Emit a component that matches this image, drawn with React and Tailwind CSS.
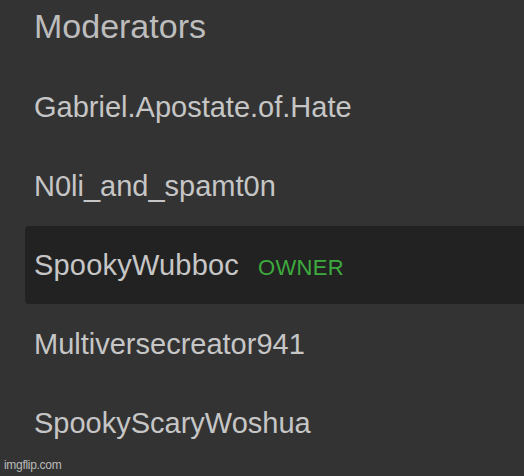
import React from 'react';

const mods = [
  { name: 'Gabriel.Apostate.of.Hate' },
  { name: 'N0li_and_spamt0n' },
  { name: 'SpookyWubboc', owner: true },
  { name: 'Multiversecreator941' },
  { name: 'SpookyScaryWoshua' },
];

export default function App() {
  return (
    <div
      className="relative w-[524px] h-[476px] overflow-hidden bg-[#333333] text-[#c6c6c6]"
      style={{ fontFamily: '"Liberation Sans", Arial, sans-serif' }}
    >
      <div className="h-[67px] pl-[34px] pt-[6px] text-[34px] leading-[40px] text-[#bdbdbd]">
        Moderators
      </div>
      <div className="flex flex-col">
        {mods.map((m) =>
          m.owner ? (
            <div
              key={m.name}
              className="ml-[25px] h-[78px] my-[0.5px] flex items-center gap-[19px] pl-[9px] pt-[3px] rounded-l-[4px] bg-[#222222]"
            >
              <span className="text-[29px] tracking-[0.2px]">{m.name}</span>
              <span className="text-[22px] text-[#3daa3d] pt-[2px] tracking-[0.3px]">OWNER</span>
            </div>
          ) : (
            <div key={m.name} className="h-[79px] flex items-center pl-[34px] pt-[2px] text-[29px]">
              {m.name}
            </div>
          )
        )}
      </div>
      <div className="absolute left-[4px] bottom-[2px] text-[12px] text-[#bbbbbb] tracking-tight">
        imgflip.com
      </div>
    </div>
  );
}
